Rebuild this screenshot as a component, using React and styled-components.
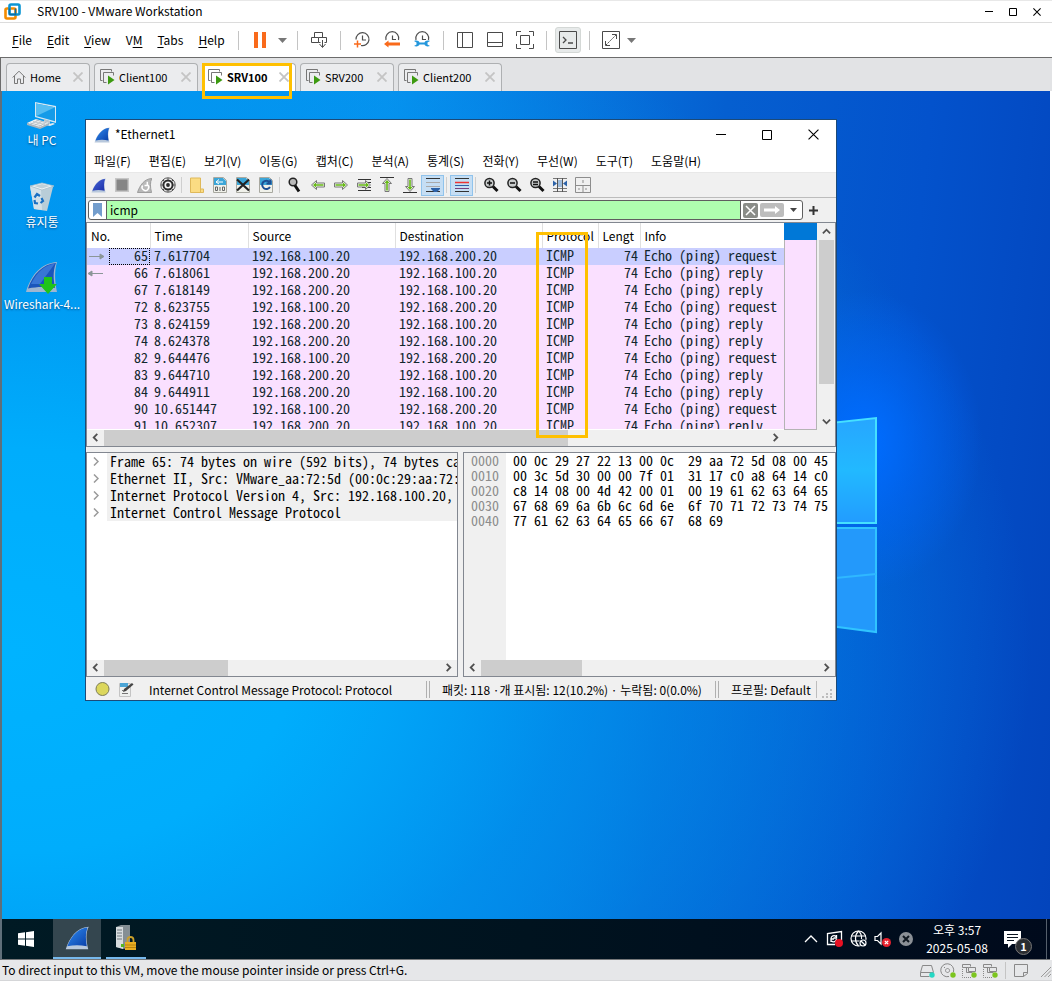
import React from "react";
import styled, { createGlobalStyle, css } from "styled-components";

const ui = `"Noto Sans CJK KR", "Noto Sans", sans-serif`;
const mono = `"Noto Sans Mono CJK KR", "Liberation Mono", monospace`;

const Global = createGlobalStyle`
  *, *::before, *::after { box-sizing: border-box; }
  body { margin: 0; background: #f0f0f0; color: #000; font: 12px/16px ${ui}; }
  button, input { font: inherit; color: inherit; border: 0; padding: 0; margin: 0; background: none; }
  svg { display: block; flex: none; }
  a { color: inherit; text-decoration: none; }
`;

/* ---------- host application ---------- */

const Host = styled.div`
  min-height: 100vh;
  display: flex;
  flex-direction: column;
  border-top: 1px solid #e8e8e8;
  background: #fff;
`;

const TitleBar = styled.header`
  display: flex;
  align-items: center;
  height: ${(p) => p.$height}px;
  padding: 0 ${(p) => p.$right}px 0 ${(p) => p.$left}px;
  background: #fff;
`;

const Title = styled.h1`
  flex: 1;
  margin: 0 0 0 ${(p) => p.$gap}px;
  padding-bottom: 2px;
  font-size: 12px;
  font-weight: 400;
  white-space: nowrap;
`;

const CaptionButton = styled.button`
  width: ${(p) => p.$width}px;
  height: 22px;
  display: grid;
  place-items: center;
`;

const MenuRow = styled.div`
  display: flex;
  align-items: center;
  height: 35px;
  border-top: 1px solid #dcdcdc;
`;

const HostMenu = styled.nav`
  display: flex;
  flex: 0 0 223px;
  gap: 1px;
  padding-left: 5px;
`;

const MenuButton = styled.button`
  padding: 0 ${(p) => p.$pad || 8}px;
  white-space: nowrap;
  u { text-underline-offset: 2px; }
`;

const ToolButton = styled.button`
  width: ${(p) => p.$width || 30}px;
  height: 26px;
  display: grid;
  place-items: center;
`;

const PressedFace = styled.span`
  width: 26px;
  height: 26px;
  display: grid;
  place-items: center;
  border: 1px solid #d4d8d6;
  border-radius: 3px;
  background: #e7eaea;
`;

const ToolSep = styled.i`
  width: 1px;
  height: 19px;
  margin: 0 6px;
  background: #c4c4c4;
`;

const TabStrip = styled.div`
  display: flex;
  align-items: flex-end;
  gap: 4px;
  height: 34px;
  padding-left: 5px;
  border-top: 1px solid #6c6c6c;
  border-left: 1px solid #6c6c6c;
  background: #e2e3e5;
`;

const Tab = styled.div`
  position: relative;
  display: flex;
  align-items: center;
  width: ${(p) => p.$width}px;
  height: 28px;
  padding: 0 5px 2px;
  border: 1px solid #aeb0b2;
  border-bottom: 0;
  border-radius: 4px 4px 0 0;
  background: ${(p) => (p.$active ? "#fff" : "#ebecee")};
`;

const TabLabel = styled.button`
  flex: 1;
  display: flex;
  align-items: center;
  gap: 4px;
  font-size: 11px;
  font-weight: ${(p) => (p.$active ? 700 : 400)};
  white-space: nowrap;
`;

const TabClose = styled.button`
  width: 11px;
  height: 12px;
`;

const Marker = styled.span`
  position: absolute;
  z-index: 5;
  left: ${(p) => p.$x}px;
  top: ${(p) => p.$y}px;
  width: ${(p) => p.$w}px;
  height: ${(p) => p.$h}px;
  border: 3px solid #ffc000;
  pointer-events: none;
`;

const HostStatus = styled.footer`
  display: flex;
  align-items: center;
  height: 21px;
  padding-left: 2px;
  border-bottom: 1px solid #d5d6d8;
  background: #e6e7e9;
  p { flex: 1; margin: 0; }
`;

const DeviceIcons = styled.div`
  display: flex;
  align-items: center;
  gap: 5px;
`;

const StatusSep = styled.i`
  width: 1px;
  height: 17px;
  margin: 0 2px;
  background: #c4c4c4;
`;

/* ---------- guest desktop ---------- */

const Guest = styled.main`
  flex: 1;
  display: flex;
  flex-direction: column;
  margin-right: 2px;
  border-left: 2px solid #5f6f7a;
  border-bottom: 1px solid #76787a;
`;

const Desktop = styled.section`
  position: relative;
  flex: 1;
  min-height: 700px;
  overflow: hidden;
  background:
    radial-gradient(ellipse 120px 150px at 860px 350px, rgba(0, 108, 255, 0.95) 10%, rgba(0, 104, 255, 0.5) 50%, rgba(0, 100, 255, 0) 100%),
    radial-gradient(ellipse 1020px 720px at 10px 560px, #00b3ff 0%, #00adfc 28%, rgba(0, 150, 240, 0.75) 55%, rgba(0, 100, 220, 0) 100%),
    linear-gradient(96deg, #009af2 0%, #0791ee 34%, #055fd0 64%, #0352cc 82%, #0344bc 100%);
`;

const Wallpaper = styled.svg`
  position: absolute;
  left: 700px;
  top: 310px;
`;

const Shortcuts = styled.div`
  position: relative;
  display: flex;
  flex-direction: column;
  align-items: center;
  width: 80px;
`;

const Shortcut = styled.a`
  display: flex;
  flex-direction: column;
  align-items: center;
  justify-content: flex-end;
  height: ${(p) => p.$height || 82}px;
  gap: 2px;
  padding-bottom: 2px;
  color: #fff;
  text-shadow: 0 1px 2px rgba(0, 40, 90, 0.7);
  white-space: nowrap;
`;

const Taskbar = styled.footer`
  display: flex;
  align-items: stretch;
  height: 40px;
  color: #fff;
  background: linear-gradient(90deg, #001a24, #00131f 50%, #000a1c);
`;

const TaskButton = styled.button`
  display: grid;
  place-items: center;
  width: ${(p) => p.$width}px;
  margin-right: ${(p) => p.$gap || 0}px;
  background: ${(p) => (p.$active ? "#34464f" : "transparent")};
  ${(p) => p.$running && css`border-bottom: 2px solid #76b9ed;`}
`;

const Tray = styled.div`
  display: flex;
  align-items: center;
  gap: 6px;
  margin-left: auto;
`;

const Clock = styled.time`
  display: flex;
  flex-direction: column;
  align-items: center;
  width: 72px;
  margin-left: 1px;
  line-height: 18px;
`;

const Notice = styled.button`
  position: relative;
  width: 28px;
  height: 28px;
  margin: 0 8px 0 5px;
`;

const NoticeCount = styled.span`
  position: absolute;
  right: 0;
  bottom: -2px;
  width: 17px;
  height: 17px;
  border: 1px solid #777;
  border-radius: 50%;
  background: #2a2d31;
  font-size: 11px;
  font-weight: 700;
  line-height: 15px;
  text-align: center;
`;

const ShowDesktop = styled.i`
  align-self: stretch;
  width: 4px;
  border-left: 1px solid #555f6b;
`;

/* ---------- capture window ---------- */

const Window = styled.article`
  position: absolute;
  left: 83px;
  top: 28px;
  width: 752px;
  height: 582px;
  display: flex;
  flex-direction: column;
  border: 1px solid #1c4a78;
  background: #f0f0f0;
`;

const AppMenu = styled.nav`
  display: flex;
  align-items: center;
  gap: 2px;
  height: 24px;
  background: #fff;
  border-bottom: 1px solid #e8e8e8;
`;

const AppTools = styled.div`
  display: flex;
  align-items: center;
  height: 24px;
  padding-left: 1px;
`;

const AppTool = styled.button`
  display: grid;
  place-items: center;
  width: 23px;
  height: 21px;
  ${(p) => p.$on && css`border: 1px solid #90c3ec; background: #c5def4;`}
`;

const AppSep = styled.i`
  width: 1px;
  height: 16px;
  margin: 0 3px 0 2px;
  background: #cfcfcf;
`;

const FilterRow = styled.form`
  display: flex;
  align-items: center;
  height: 25px;
  padding-left: 2px;
  border-top: 1px solid #bcbcbc;
`;

const FilterBox = styled.div`
  flex: 1;
  display: flex;
  align-items: center;
  height: 20px;
  overflow: hidden;
  border: 1px solid #5f5f5f;
  border-radius: 3px;
  background: #fff;
`;

const FilterInput = styled.input`
  flex: 1;
  height: 18px;
  padding: 0 3px 1px;
  border: solid #5f5f5f;
  border-width: 0 1px;
  outline: 0;
  background: #afffaf;
`;

const FilterButton = styled.button`
  display: grid;
  place-items: center;
  width: ${(p) => p.$width}px;
  height: 18px;
`;

const PlusButton = styled.button`
  width: 33px;
  padding-left: 6px;
`;

const PacketFrame = styled.section`
  position: relative;
  display: flex;
  flex-direction: column;
  height: 225px;
  border: 1px solid #828790;
  background: #f0f0f0;
`;

const PacketTop = styled.div`
  flex: 1;
  display: flex;
  min-height: 0;
`;

const PacketArea = styled.div`
  flex: 1;
  overflow: hidden;
  background: #fff;
  border-bottom: 1px solid #fff;
`;

const PacketTable = styled.table`
  width: 100%;
  table-layout: fixed;
  border-collapse: collapse;
  th {
    height: 25px;
    padding: 0 0 0 4px;
    border-right: 1px solid #e0e0e0;
    font-weight: 400;
    text-align: left;
    white-space: nowrap;
  }
  th:last-child { border-right: 0; }
  td {
    height: 17px;
    padding: 0 2px 2px 4px;
    font: 14px/15px ${mono};
    color: #12272e;
    white-space: pre;
  }
`;

const PacketRow = styled.tr`
  background: ${(p) => (p.$selected ? "#c9ceff" : "#fae0ff")};
`;

const NumberCell = styled.div`
  display: flex;
  align-items: center;
  justify-content: space-between;
  height: 17px;
  margin: 0 -2px -2px -4px;
`;

const Num = styled.span`
  width: 41px;
  height: 17px;
  padding: ${(p) => (p.$focus ? "0 1px 2px 0" : "0 2px 2px 0")};
  line-height: ${(p) => (p.$focus ? 13 : 15)}px;
  border: ${(p) => (p.$focus ? "1px dotted #000" : "0 solid")};
  text-align: right;
`;

const RightCell = styled.td`
  text-align: right;
`;

const MiniMap = styled.div`
  width: 33px;
  border: 1px solid #b4b4b4;
  border-width: 0 1px 1px;
  background: #fae0ff;
  &::before { content: ""; display: block; height: 17px; margin: 0 -1px; background: #0078d7; }
`;

const VScroll = styled.div`
  display: flex;
  flex-direction: column;
  width: 18px;
  padding: 0 1px 0 2px;
`;

const HScroll = styled.div`
  display: flex;
  height: 16px;
  margin-right: ${(p) => p.$right || 0}px;
  background: #f0f0f0;
`;

const ScrollButton = styled.button`
  display: grid;
  place-items: center;
  width: ${(p) => p.$w || 17}px;
  height: ${(p) => p.$h || 15}px;
`;

const ThumbTrack = styled.div`
  flex: 1;
  display: flex;
  flex-direction: ${(p) => (p.$vertical ? "column" : "row")};
  &::before { content: ""; flex: 0 0 ${(p) => p.$size}; background: #cdcdcd; }
`;

const Lower = styled.div`
  flex: 1;
  display: grid;
  grid-template-columns: 372px 1fr;
  gap: 5px;
  margin-top: 5px;
`;

const Pane = styled.section`
  display: flex;
  flex-direction: column;
  min-width: 0;
  overflow: hidden;
  border: 1px solid #828790;
  background: #fff;
`;

const Tree = styled.ul`
  flex: 1;
  margin: 0;
  padding: 0;
  list-style: none;
  font: 14px/17px ${mono};
  white-space: pre;
`;

const TreeRow = styled.li`
  display: flex;
  height: 17px;
  button { flex: none; width: 20px; padding-left: 6px; }
  span { flex: 1; min-width: 0; padding-left: 3px; overflow: hidden; background: #f0f0f0; }
`;

const Hex = styled.div`
  flex: 1;
  display: flex;
  font: 14px/15px ${mono};
  pre { margin: 0; font: inherit; }
`;

const Offsets = styled.pre`
  width: 42px;
  padding-left: 7px;
  background: #f0f0f0;
  color: #8c8c8c;
`;

const Bytes = styled.pre`
  padding-left: 7px;
`;

const AppStatus = styled.footer`
  display: flex;
  align-items: center;
  height: 23px;
  padding: 2px 3px 0 9px;
  white-space: nowrap;
`;

const StatusField = styled.span`
  flex: ${(p) => p.$flex || "none"};
  margin-left: ${(p) => p.$left}px;
`;

const DoubleBar = styled.i`
  width: 4px;
  height: 17px;
  border: solid #b0b0b0;
  border-width: 0 1px;
`;

/* ---------- drawings ---------- */

const Cross = ({ s = 10, c = "#000", w = 1 }) => (
  <svg width={s} height={s} viewBox="0 0 10 10"><path d="M.5.5l9 9M9.5.5l-9 9" stroke={c} strokeWidth={w} fill="none" /></svg>
);
const Caret = () => <svg width="9" height="5"><path d="M0 0h9L4.5 5z" fill="#777" /></svg>;
const Chevron = ({ r = 0 }) => (
  <svg width="9" height="9" viewBox="0 0 10 10"><path transform={`rotate(${r} 5 5)`} d="M1 7l4-4 4 4" stroke="#505050" strokeWidth="2" fill="none" /></svg>
);
const Expander = () => <svg width="6" height="9"><path d="M1 .5l4 4-4 4" stroke="#999" strokeWidth="1.5" fill="none" /></svg>;

const VmLogo = () => (
  <svg width="17" height="17" viewBox="0 0 17 17" fill="none" strokeWidth="2.6">
    <rect x="1.500" y="5.500" width="10" height="10" rx="1.500" stroke="#f38b00" />
    <rect x="5.500" y="1.500" width="10" height="10" rx="1.500" stroke="#0b95d3" />
    <path d="M5.500 5.500v6h6v-6" stroke="#0b6fa8" strokeWidth="1.500" />
  </svg>
);
const Fin = ({ s = 16, id = "fin", a = "#2f8cf0", b = "#0a3fa8", base = "#b8c8dc" }) => (
  <svg width={s} height={s} viewBox="0 0 16 16">
    <defs><linearGradient id={id} x1="0" y1="0" x2="1" y2="1"><stop stopColor={a} /><stop offset="1" stopColor={b} /></linearGradient></defs>
    <path d="M.5 15.500C3 8 7.500 1 15.800.500c-2 4-1.800 9-.3 15z" fill={base} />
    <path d="M1.500 13.500C4.500 6 9 1.500 15 1c-1.500 4-1.200 8-.5 12.500C10 12.600 6 12.600 1.500 13.500z" fill={`url(#${id})`} />
  </svg>
);
const HomeIcon = () => (
  <svg width="14" height="14" fill="none" stroke="#777"><path d="M.7 7.500L7 1.200l6.300 6.300M2.500 6v7.500h3V9h3v4.500h3V6" /></svg>
);
const VmIcon = () => (
  <svg width="15" height="16" fill="none" stroke="#777">
    <path d="M2.500 11.500h-2V.5h11v2" /><path d="M6.500 13.500h-3v-10h10v3" />
    <path d="M8 6.500l6.500 4.500L8 15.500z" fill="#3c9a10" stroke="none" />
  </svg>
);
const Pause = () => <svg width="12" height="16"><path d="M0 0h4v16H0zM8 0h4v16H8z" fill="#f96a1b" /></svg>;
const SendKeys = () => (
  <svg width="18" height="18" fill="none" stroke="#4a4a4a">
    <path d="M4.500 6.500v-5h8v5M1.500 6.500h7v5h-7zM8.500 6.500h8v5h-2M8.500 11.500h2M12.500 9v7M9.500 13l3 3.500 3-3.500" />
  </svg>
);
const ClockIcon = ({ kind }) => (
  <svg width="18" height="18" fill="none" stroke="#4f4f4f" strokeWidth="1.2">
    <path d={kind === "add" ? "M3 8.500a6.500 6.500 0 1 1 5 6M9.500 4.500V9H13" : "M3 9a6.500 6.500 0 1 1 12.500 0M9.500 4.500V8.500H13"} />
    {kind === "add" && <path d="M1 13h7M4.500 9.500v7" stroke="#f96a1b" strokeWidth="1.5" />}
    {kind === "back" && <path d="M1 13l4.500-3.500v2H17v3H5.500v2z" fill="#f96a1b" stroke="none" />}
    {kind === "manage" && <path d="M1 10c3-1 5 0 5.500 1.500h5C12 10 14 9 17 10l-2.500 1.500v2L17 15c-3 1-5 0-5.500-1.500h-5C6 15 4 16 1 15l2.500-1.500v-2z" fill="#2497dc" stroke="none" />}
  </svg>
);
const Layout = ({ d }) => <svg width="16" height="16" fill="none" stroke="#4a4a4a"><path d={d} /></svg>;
const FitGuest = () => (
  <svg width="18" height="18" fill="none" stroke="#4a4a4a"><path d="M.5 5V.5H5M13 .5h4.500V5M17.500 13v4.500H13M5 17.500H.5V13M4.500 4.500h9v9h-9z" /></svg>
);
const Console = () => (
  <svg width="18" height="18" fill="none" stroke="#4a4a4a"><path d="M.5.5h17v17H.5z" /><path d="M4 6l3 3-3 3M9 12h5" strokeWidth="1.3" /></svg>
);
const FullIcon = () => (
  <svg width="18" height="18" fill="none" stroke="#4a4a4a"><path d="M.5.5h17v17H.5zM10 3.500h4.500V8M8 14.500H3.500V10" /><path d="M4 14L14 4" strokeDasharray="2 1" /></svg>
);

const PcIcon = () => (
  <svg width="32" height="30" viewBox="0 0 32 30">
    <path d="M9 2l21 4v17L9 17z" fill="#d8e8f2" /><path d="M10 3.500l19 3.700v14L10 16z" fill="#159be8" /><path d="M10 3.500l19 3.700-19 9z" fill="#56bdf2" />
    <path d="M18 19l6 2v3l-6-1.500z" fill="#b9c6cf" /><path d="M15 22l8 2 4-1 2 1-5 2-9-2z" fill="#e4e9ec" />
    <path d="M1 23l9-4 13 4-9 5z" fill="#f1f3f4" /><path d="M1 23l13 4 9-4v2l-9 4-13-4z" fill="#a9b5bd" /><path d="M4 23l12 3M7 21.500l12 3M10 20l11 3M5 24l8-4M9 25l8-4M13 26.500l7-4" stroke="#aab4bb" strokeWidth=".7" />
  </svg>
);
const BinIcon = () => (
  <svg width="28" height="30" viewBox="0 0 28 30">
    <path d="M2 4l4 23 13 2 6-24z" fill="#b9cdd8" /><path d="M2 4l4 23 8 1-1-20z" fill="#d3e1e9" /><path d="M2 4l12-3 12 3-12 4z" fill="#eef4f6" stroke="#a9bfca" strokeWidth=".8" /><path d="M6 4l8-2 8 2-8 2.500z" fill="#bfd0d9" />
    <path d="M6.500 15.500L9 12l3 2M13.500 16l1.500 3-2.500 2M10 21.500l-3-.5-.5-3" fill="none" stroke="#1b6fc2" strokeWidth="2.2" />
  </svg>
);
const InstallerIcon = () => (
  <svg width="34" height="33" viewBox="0 0 34 33">
    <path d="M1 31C6 14 16 2 32 1c-3 10-2 20 0 30z" fill="#9fb6d0" /><path d="M3 27.500C8 13 18 3 31 2c-3.500 9-2.500 17-1 25C20 25.500 12 25.500 3 27.500z" fill="#1a55bb" /><path d="M6 23C12 11 19 4.500 30 2.500L15 23z" fill="#3876d6" />
    <path d="M19 16h8v7h5l-9 10-9-10h5z" fill="#1fc41b" />
  </svg>
);
const WinLogo = () => (
  <svg width="16" height="16"><path d="M0 2.300l7-1v6.200H0zM8 1.200L16 0v7.500H8zM0 8.500h7v6.200l-7-1zM8 8.500h8V16l-8-1.200z" fill="#fff" /></svg>
);
const ServerIcon = () => (
  <svg width="22" height="26" viewBox="0 0 22 26">
    <path d="M1 2l5-2h9v20l-6 4-8-2z" fill="#858f94" /><path d="M1 2h7v22l-7-2z" fill="#d7dcde" /><path d="M2 5h5M2 8h5M2 11h5M2 14h5" stroke="#6e797e" /><path d="M6 19h3v3H6z" fill="#57b81f" />
    <path d="M12.500 18v-3a3 3 0 0 1 6 0v3" fill="none" stroke="#caa02a" strokeWidth="1.8" /><path d="M10 17h11v8H10z" fill="#e9ae22" /><path d="M10 20h11M10 22.500h11" stroke="#b8830e" />
  </svg>
);

const Doc = ({ children }) => (
  <svg width="16" height="18" viewBox="0 0 16 18"><path d="M1.500 1.500h10l3 3v12h-13z" fill="#f0f1ea" stroke="#a8a8a0" /><path d="M2 2h9l3 3v4H2z" fill="#3ca6d8" />{children}</svg>
);
const Glass = ({ sign }) => (
  <svg width="16" height="16" viewBox="0 0 16 16" fill="none"><circle cx="6.500" cy="6" r="4.600" fill="#c9cccc" stroke="#222" strokeWidth="1.5" /><path d="M10 9.500l4.500 4.500" stroke="#111" strokeWidth="3" />{sign && <path d={sign} stroke="#111" strokeWidth="1.5" />}</svg>
);
const GreenArrow = ({ r = 0, lines }) => (
  <svg width="16" height="16" viewBox="0 0 16 16">
    {lines && <path d={lines} stroke="#333" fill="none" />}
    <path transform={`rotate(${r} 8 8)`} d="M1.500 8l5-4.500v2.500h8v4h-8v2.500z" fill="#f4f7ee" stroke="#777" />
    <path transform={`rotate(${r} 8 8)`} d="M3 8l3-2.500V7.200h7.500v1.600H6v1.700z" fill="#66b916" />
  </svg>
);

const tools = [
  ["capture start", <Fin s={15} id="finStart" a="#4966d8" b="#1b2fa8" />],
  ["capture stop", <svg width="14" height="14"><path d="M.5.5h13v13H.5z" fill="#858585" stroke="#c6c6c6" strokeWidth="2" /></svg>],
  ["capture restart", <svg width="15" height="15" viewBox="0 0 16 16"><path d="M.5 15.500C3 8 7.500 1 15.800.500c-2 4-1.800 9-.3 15z" fill="#b9b9b9" stroke="#999" /><path d="M6 8a3.500 3.500 0 1 0 5-1M11 4v4h-3" stroke="#fff" strokeWidth="1.6" fill="none" /></svg>],
  ["capture options", <svg width="16" height="16" viewBox="0 0 16 16"><circle cx="8" cy="8" r="7.200" fill="#f4f4f4" stroke="#555" /><circle cx="8" cy="8" r="4.600" fill="none" stroke="#2b2b2b" strokeWidth="2" /><circle cx="8" cy="8" r="1.900" fill="#2b2b2b" /><path d="M8 1v2M8 13v2M1 8h2M13 8h2M3 3l1.500 1.500M13 3l-1.500 1.500M3 13l1.500-1.500M13 13l-1.500-1.500" stroke="#555" /></svg>],
  null,
  ["open", <svg width="14" height="16"><path d="M.5 1h10v11h3v3.500H.5z" fill="#fbdc83" stroke="#dfb95a" /><path d="M10.500 12v3.500" stroke="#dfb95a" /></svg>],
  ["save", <Doc><path d="M4 6h7M7 3.500L4 6l3 2" stroke="#fff" fill="none" /><path d="M3.500 11v3.500h2V11zM8 11v4M10.500 11v3.500h2V11z" stroke="#666" fill="none" /></Doc>],
  ["close file", <Doc><path d="M2 3.500l12 11M14 3.500l-12 11" stroke="#222" strokeWidth="2.2" /></Doc>],
  ["reload", <Doc><path d="M11.500 6A4.200 4.200 0 1 0 12 11M12.500 3.500v4H8.500" stroke="#1d4e93" strokeWidth="2" fill="none" /></Doc>],
  null,
  ["find", <svg width="16" height="16"><circle cx="6" cy="5" r="3.800" fill="#bbb" stroke="#222" strokeWidth="1.5" /><path d="M8 8.500l4 6" stroke="#111" strokeWidth="3" /></svg>],
  ["previous", <GreenArrow />],
  ["next", <GreenArrow r={180} />],
  ["go to", <GreenArrow r={180} lines="M2 2.500h13M2 13.500h13M10 5.500h5M6 10.500h9" />],
  ["first", <GreenArrow r={90} lines="M1 .5h14" />],
  ["last", <GreenArrow r={270} lines="M1 15.500h14" />],
  ["auto scroll", <svg width="16" height="16"><path d="M1 1.500h14M1 14.500h14" stroke="#333" /><path d="M1 5.500h14M1 9.500h14" stroke="#aaa" /><path d="M6 11h9v1l-3 3h-3l-3-3z" fill="#2c62a8" /></svg>, true],
  null,
  ["colorize", <svg width="16" height="16"><path d="M1 1.500h14M1 14.500h14" stroke="#333" /><path d="M1 5.500h14" stroke="#e33" strokeWidth="1.5" /><path d="M1 8.500h14" stroke="#2c62a8" /><path d="M1 11.500h14" stroke="#75407e" /></svg>, true],
  null,
  ["zoom in", <Glass sign="M4 6h5M6.500 3.500v5" />],
  ["zoom out", <Glass sign="M4 6h5" />],
  ["zoom reset", <Glass sign="M4 5h5M4 7.500h5" />],
  ["resize columns", <svg width="16" height="16"><path d="M1 1.500h14M1 14.500h14M1 11.500h14" stroke="#777" strokeDasharray="4 1" /><path d="M5.500 1v14M10.500 1v14" stroke="#555" /><path d="M1 3.500l4 3-4 3zM15 3.500l-4 3 4 3z" fill="#2c62a8" /><path d="M6 3h4v7H6z" fill="#9fbcdc" /></svg>],
  ["layout", <svg width="16" height="16" fill="none" stroke="#8d8d8d"><path d="M.5.5h15v15H.5zM.5 8.500h15M8 8.500v7" /><path d="M8 3v3M4 11v2M11 11v2" /></svg>],
];

const menus = ["파일(F)", "편집(E)", "보기(V)", "이동(G)", "캡처(C)", "분석(A)", "통계(S)", "전화(Y)", "무선(W)", "도구(T)", "도움말(H)"];
const A = "192.168.100.20";
const B = "192.168.200.20";
const packets = [
  [65, "7.617704", A, B, "request"],
  [66, "7.618061", B, A, "reply"],
  [67, "7.618149", B, A, "reply"],
  [72, "8.623755", A, B, "request"],
  [73, "8.624159", B, A, "reply"],
  [74, "8.624378", B, A, "reply"],
  [82, "9.644476", A, B, "request"],
  [83, "9.644710", B, A, "reply"],
  [84, "9.644911", B, A, "reply"],
  [90, "10.651447", A, B, "request"],
  [91, "10.652307", B, A, "reply"],
];
const details = [
  "Frame 65: 74 bytes on wire (592 bits), 74 bytes ca",
  "Ethernet II, Src: VMware_aa:72:5d (00:0c:29:aa:72:",
  "Internet Protocol Version 4, Src: 192.168.100.20,",
  "Internet Control Message Protocol",
];
const hexRows = [
  "00 0c 29 27 22 13 00 0c  29 aa 72 5d 08 00 45",
  "00 3c 5d 30 00 00 7f 01  31 17 c0 a8 64 14 c0",
  "c8 14 08 00 4d 42 00 01  00 19 61 62 63 64 65",
  "67 68 69 6a 6b 6c 6d 6e  6f 70 71 72 73 74 75",
  "77 61 62 63 64 65 66 67  68 69",
];
const columns = [["No.", 63], ["Time", 98], ["Source", 147], ["Destination", 147], ["Protocol", 56], ["Lengt", 42], ["Info"]];
const tabs = [["Home", 84], ["Client100", 104], ["SRV100", 94, true], ["SRV200", 94], ["Client200", 104]];

function RelatedArrow({ index }) {
  if (index > 1) return <span />;
  return (
    <svg width="18" height="9" fill="#8b9698" stroke="#8b9698">
      {index === 0 ? <path d="M2 4.500h13M13 2v5l4-2.500z" /> : <path d="M4 4.500h12M5 2v5L1 4.500z" />}
    </svg>
  );
}

function CaptureWindow() {
  return (
    <Window>
      <TitleBar $height={29} $left={8} $right={0}>
        <Fin id="finTitle" />
        <Title as="h2" $gap={5}>*Ethernet1</Title>
        <CaptionButton $width={46} aria-label="Minimize"><svg width="10" height="1"><path d="M0 .5h10" stroke="#000" /></svg></CaptionButton>
        <CaptionButton $width={46} aria-label="Maximize"><svg width="10" height="10"><path d="M.5.5h9v9h-9z" fill="none" stroke="#000" /></svg></CaptionButton>
        <CaptionButton $width={46} aria-label="Close"><Cross s={11} /></CaptionButton>
      </TitleBar>
      <AppMenu>{menus.map((m) => <MenuButton key={m}>{m}</MenuButton>)}</AppMenu>
      <AppTools>
        {tools.map((t, i) => (t ? <AppTool key={i} aria-label={t[0]} $on={t[2]}>{t[1]}</AppTool> : <AppSep key={i} />))}
      </AppTools>
      <FilterRow onSubmit={(e) => e.preventDefault()}>
        <FilterBox>
          <FilterButton type="button" $width={17} aria-label="Bookmarks"><svg width="9" height="14"><path d="M0 0h9v14L4.500 10 0 14z" fill="#739dcc" /></svg></FilterButton>
          <FilterInput aria-label="Display filter" defaultValue="icmp" />
          <FilterButton type="button" $width={18} aria-label="Clear"><svg width="15" height="15"><rect width="15" height="15" rx="2" fill="#8a8c88" /><path d="M3 3l9 9M12 3l-9 9" stroke="#fff" strokeWidth="1.5" /></svg></FilterButton>
          <FilterButton $width={26} aria-label="Apply"><svg width="24" height="14"><rect width="24" height="14" rx="2" fill="#bdbdbd" /><path d="M4 5.500h11V3l5 4-5 4V8.500H4z" fill="#fff" /></svg></FilterButton>
          <FilterButton type="button" $width={17} aria-label="Recent filters"><svg width="7" height="4"><path d="M0 0h7L3.500 4z" fill="#444" /></svg></FilterButton>
        </FilterBox>
        <PlusButton type="button" aria-label="Add filter button"><svg width="9" height="9"><path d="M4.500 0v9M0 4.500h9" stroke="#333" strokeWidth="2" /></svg></PlusButton>
      </FilterRow>
      <PacketFrame>
        <PacketTop>
          <PacketArea>
            <PacketTable>
              <colgroup>{columns.map(([n, w]) => <col key={n} width={w} />)}</colgroup>
              <thead><tr>{columns.map(([n]) => <th key={n} scope="col">{n}</th>)}</tr></thead>
              <tbody>
                {packets.map(([no, time, src, dst, kind], i) => (
                  <PacketRow key={no} $selected={i === 0}>
                    <td><NumberCell><RelatedArrow index={i} /><Num $focus={i === 0}>{no}</Num></NumberCell></td>
                    <td>{time}</td>
                    <td>{src}</td>
                    <td>{dst}</td>
                    <td>ICMP</td>
                    <RightCell>74</RightCell>
                    <td>Echo (ping) {kind}</td>
                  </PacketRow>
                ))}
              </tbody>
            </PacketTable>
          </PacketArea>
          <MiniMap />
          <VScroll>
            <ScrollButton $w={15} $h={17} aria-label="Scroll up"><Chevron /></ScrollButton>
            <ThumbTrack $vertical $size="83%" />
            <ScrollButton $w={15} $h={17} aria-label="Scroll down"><Chevron r={180} /></ScrollButton>
          </VScroll>
        </PacketTop>
        <HScroll $right={51}>
          <ScrollButton aria-label="Scroll left"><Chevron r={270} /></ScrollButton>
          <ThumbTrack $size="70%" />
          <ScrollButton aria-label="Scroll right"><Chevron r={90} /></ScrollButton>
        </HScroll>
        <Marker $x={449} $y={9} $w={52} $h={206} />
      </PacketFrame>
      <Lower>
        <Pane>
          <Tree>{details.map((d) => <TreeRow key={d}><button aria-label="Expand"><Expander /></button><span>{d}</span></TreeRow>)}</Tree>
          <HScroll>
            <ScrollButton aria-label="Scroll left"><Chevron r={270} /></ScrollButton>
            <ThumbTrack $size="37%" />
            <ScrollButton aria-label="Scroll right"><Chevron r={90} /></ScrollButton>
          </HScroll>
        </Pane>
        <Pane>
          <Hex>
            <Offsets>{"0000\n0010\n0020\n0030\n0040"}</Offsets>
            <Bytes>{hexRows.join("\n")}</Bytes>
          </Hex>
          <HScroll>
            <ScrollButton aria-label="Scroll left"><Chevron r={270} /></ScrollButton>
            <ThumbTrack $size="30%" />
            <ScrollButton aria-label="Scroll right"><Chevron r={90} /></ScrollButton>
          </HScroll>
        </Pane>
      </Lower>
      <AppStatus>
        <svg width="15" height="15"><circle cx="7.500" cy="7" r="6.500" fill="#dcd75c" stroke="#7d7d55" /></svg>
        <StatusField $left={9}>
          <svg width="15" height="15"><path d="M.5 1.500h11v13H.5z" fill="#eef0ee" stroke="#c4c4c4" /><path d="M1 1h8v4H1z" fill="#4ba5d6" /><path d="M4 10l1-3 8-6 1.500 1.500L7 9z" fill="#444" /><path d="M3 8.500h2M3 11.500h6" stroke="#777" /></svg>
        </StatusField>
        <StatusField $left={15} $flex={1}>Internet Control Message Protocol: Protocol</StatusField>
        <DoubleBar />
        <StatusField $left={12} $flex="0 0 273px">패킷: 118 ·개 표시됨: 12(10.2%) · 누락됨: 0(0.0%)</StatusField>
        <DoubleBar />
        <StatusField $left={12} $flex="0 0 85px">프로필: Default</StatusField>
        <svg width="17" height="17" fill="#bdbdbd"><path d="M0 0h1v17H0zM14 8h2v2h-2zM14 12h2v2h-2zM10 12h2v2h-2zM14 15h2v2h-2zM10 15h2v2h-2zM6 15h2v2H6z" /></svg>
      </AppStatus>
    </Window>
  );
}

function DeviceIcon({ d, dot }) {
  return <svg width="16" height="15" fill="none" stroke="#888"><path d={d} />{dot && <circle cx="13" cy="12" r="2.700" fill={dot} stroke="none" />}</svg>;
}

function NetworkIcon() {
  return (
    <svg width="16" height="15" fill="none" stroke="#888">
      <path d="M7.500 4.500h-6v-3h8v2M5.500 4.500v5h6M7.500 4.500h7v4h-7z" />
      <path d="M1.500 6v8.500h9" strokeDasharray="1 1" />
      <circle cx="13" cy="12" r="2.700" fill="#7cc51f" stroke="none" />
    </svg>
  );
}

export default function App() {
  return (
    <Host>
      <Global />
      <TitleBar $height={21} $left={4} $right={3}>
        <VmLogo />
        <Title $gap={16}>SRV100 - VMware Workstation</Title>
        <CaptionButton $width={24} aria-label="Minimize"><svg width="8" height="1"><path d="M0 .5h8" stroke="#000" /></svg></CaptionButton>
        <CaptionButton $width={24} aria-label="Maximize"><svg width="8" height="8"><path d="M.5.5h7v7h-7z" fill="none" stroke="#000" /></svg></CaptionButton>
        <CaptionButton $width={24} aria-label="Close"><Cross s={8} w={1.3} /></CaptionButton>
      </TitleBar>
      <MenuRow>
        <HostMenu>
          <MenuButton $pad={7}><u>F</u>ile</MenuButton>
          <MenuButton $pad={7}><u>E</u>dit</MenuButton>
          <MenuButton $pad={7}><u>V</u>iew</MenuButton>
          <MenuButton $pad={7}>V<u>M</u></MenuButton>
          <MenuButton $pad={7}><u>T</u>abs</MenuButton>
          <MenuButton $pad={7}><u>H</u>elp</MenuButton>
        </HostMenu>
        <ToolSep />
        <ToolButton aria-label="Suspend"><Pause /></ToolButton>
        <ToolButton $width={16} aria-label="Power menu"><Caret /></ToolButton>
        <ToolSep />
        <ToolButton aria-label="Send Ctrl+Alt+Del"><SendKeys /></ToolButton>
        <ToolSep />
        <ToolButton aria-label="Take snapshot"><ClockIcon kind="add" /></ToolButton>
        <ToolButton aria-label="Revert"><ClockIcon kind="back" /></ToolButton>
        <ToolButton aria-label="Manage snapshots"><ClockIcon kind="manage" /></ToolButton>
        <ToolSep />
        <ToolButton aria-label="Library"><Layout d="M.5.5h15v15H.5zM5.500.5v15" /></ToolButton>
        <ToolButton aria-label="Thumbnail bar"><Layout d="M.5.5h15v14H.5zM.5 10.500h15" /></ToolButton>
        <ToolButton aria-label="Fit guest"><FitGuest /></ToolButton>
        <ToolSep />
        <ToolButton aria-label="Console view"><PressedFace><Console /></PressedFace></ToolButton>
        <ToolSep />
        <ToolButton aria-label="Full screen"><FullIcon /></ToolButton>
        <ToolButton $width={12} aria-label="Screen menu"><Caret /></ToolButton>
      </MenuRow>
      <TabStrip>
        {tabs.map(([name, width, active]) => (
          <Tab key={name} $width={width} $active={active}>
            <TabLabel $active={active}>{name === "Home" ? <HomeIcon /> : <VmIcon />}{name}</TabLabel>
            <TabClose aria-label={`Close ${name}`}><Cross c="#c4c4c4" w={1.8} /></TabClose>
            {active && <Marker $x={-1} $y={-1} $w={90} $h={36} />}
          </Tab>
        ))}
      </TabStrip>
      <Guest>
        <Desktop>
          <Wallpaper width="185" height="240" viewBox="0 0 185 240">
            <defs><linearGradient id="pane" x1="0" y1="0" x2="0" y2="1"><stop stopColor="#27a6ff" /><stop offset=".5" stopColor="#22b9ff" /><stop offset="1" stopColor="#229cff" /></linearGradient></defs>
            <path d="M0 36L174 17v105H0z" fill="url(#pane)" stroke="#45e0ff" strokeWidth="2" />
            <path d="M0 127h174v104L0 208z" fill="#2399fb" stroke="#30c4ff" strokeWidth="2" />
            <path d="M0 190l174-17" stroke="#2fb8ff" strokeWidth="2" />
          </Wallpaper>
          <Shortcuts>
            <Shortcut href="#pc" $height={59}><PcIcon />내 PC</Shortcut>
            <Shortcut href="#bin"><BinIcon />휴지통</Shortcut>
            <Shortcut href="#wireshark"><InstallerIcon />Wireshark-4...</Shortcut>
          </Shortcuts>
          <CaptureWindow />
        </Desktop>
        <Taskbar>
          <TaskButton $width={48} $gap={3} aria-label="Start"><WinLogo /></TaskButton>
          <TaskButton $width={48} $gap={5} $active $running aria-label="Wireshark"><Fin s={24} id="finTask" /></TaskButton>
          <TaskButton $width={40} $running aria-label="Server"><ServerIcon /></TaskButton>
          <Tray>
            <svg width="16" height="8"><path d="M1 7l6-6 6 6" stroke="#fff" fill="none" strokeWidth="1.3" /></svg>
            <svg width="18" height="18" fill="none" stroke="#fff" strokeWidth="1.3"><path d="M9 14.500H1.500v-11l14-2v9M5 12V9h3M10.500 5v3h-3M5 8.500a3 3 0 0 1 5-2M10.500 9a3 3 0 0 1-5 2" /><circle cx="13" cy="13" r="4" fill="#e81123" stroke="none" /></svg>
            <svg width="18" height="18" fill="none" stroke="#fff" strokeWidth="1.2"><circle cx="8.500" cy="8.500" r="7.500" /><path d="M1 6h15M1 11h10M8.500 1c-4 4-4 11 0 15M8.500 1c2.500 2 3.300 5 3 8" /><circle cx="13" cy="13" r="4.200" fill="#001020" stroke="none" /><circle cx="13" cy="13" r="3" /><path d="M11 11l4 4" /></svg>
            <svg width="18" height="18" fill="none" stroke="#fff" strokeWidth="1.2"><path d="M1 6.500h2.500L7 3v11l-3.500-3.500H1z" /><circle cx="12.500" cy="12.500" r="4.500" fill="#e8212e" stroke="none" /><path d="M10.800 10.800l3.400 3.400M14.200 10.800l-3.400 3.400" /></svg>
            <svg width="16" height="16"><circle cx="8" cy="8" r="7" fill="#8b9096" /><path d="M5 5l6 6M11 5l-6 6" stroke="#101820" strokeWidth="2" /></svg>
            <Clock><span>오후 3:57</span><span>2025-05-08</span></Clock>
            <Notice aria-label="Notifications">
              <svg width="17" height="18"><path d="M0 1h17v13h-9l-4 4v-4H0z" fill="#fff" /><path d="M3 4.500h11M3 7.500h11M3 10.500h7" stroke="#0a1420" /></svg>
              <NoticeCount>1</NoticeCount>
            </Notice>
            <ShowDesktop />
          </Tray>
        </Taskbar>
      </Guest>
      <HostStatus>
        <p>To direct input to this VM, move the mouse pointer inside or press Ctrl+G.</p>
        <DeviceIcons>
          <DeviceIcon d="M3.500 2.500h9l2 7H1.500zM1.500 9.500v4h9" dot="#25d8c4" />
          <DeviceIcon d="M13.500 9A6.500 6.500 0 1 0 9 13.500M7.500 5.500a2 2 0 1 0 .1 0M4 5l1-1" dot="#7cc51f" />
          <NetworkIcon />
          <NetworkIcon />
          <StatusSep />
          <DeviceIcon d="M1.500 1.500h13v9l-4 3h-9zM14.500 9.500h-4v4" />
          <svg width="18" height="16" stroke="#999"><path d="M7 15L17 5M10.500 15l6.500-6.500M14 15l3-3" /></svg>
        </DeviceIcons>
      </HostStatus>
    </Host>
  );
}
